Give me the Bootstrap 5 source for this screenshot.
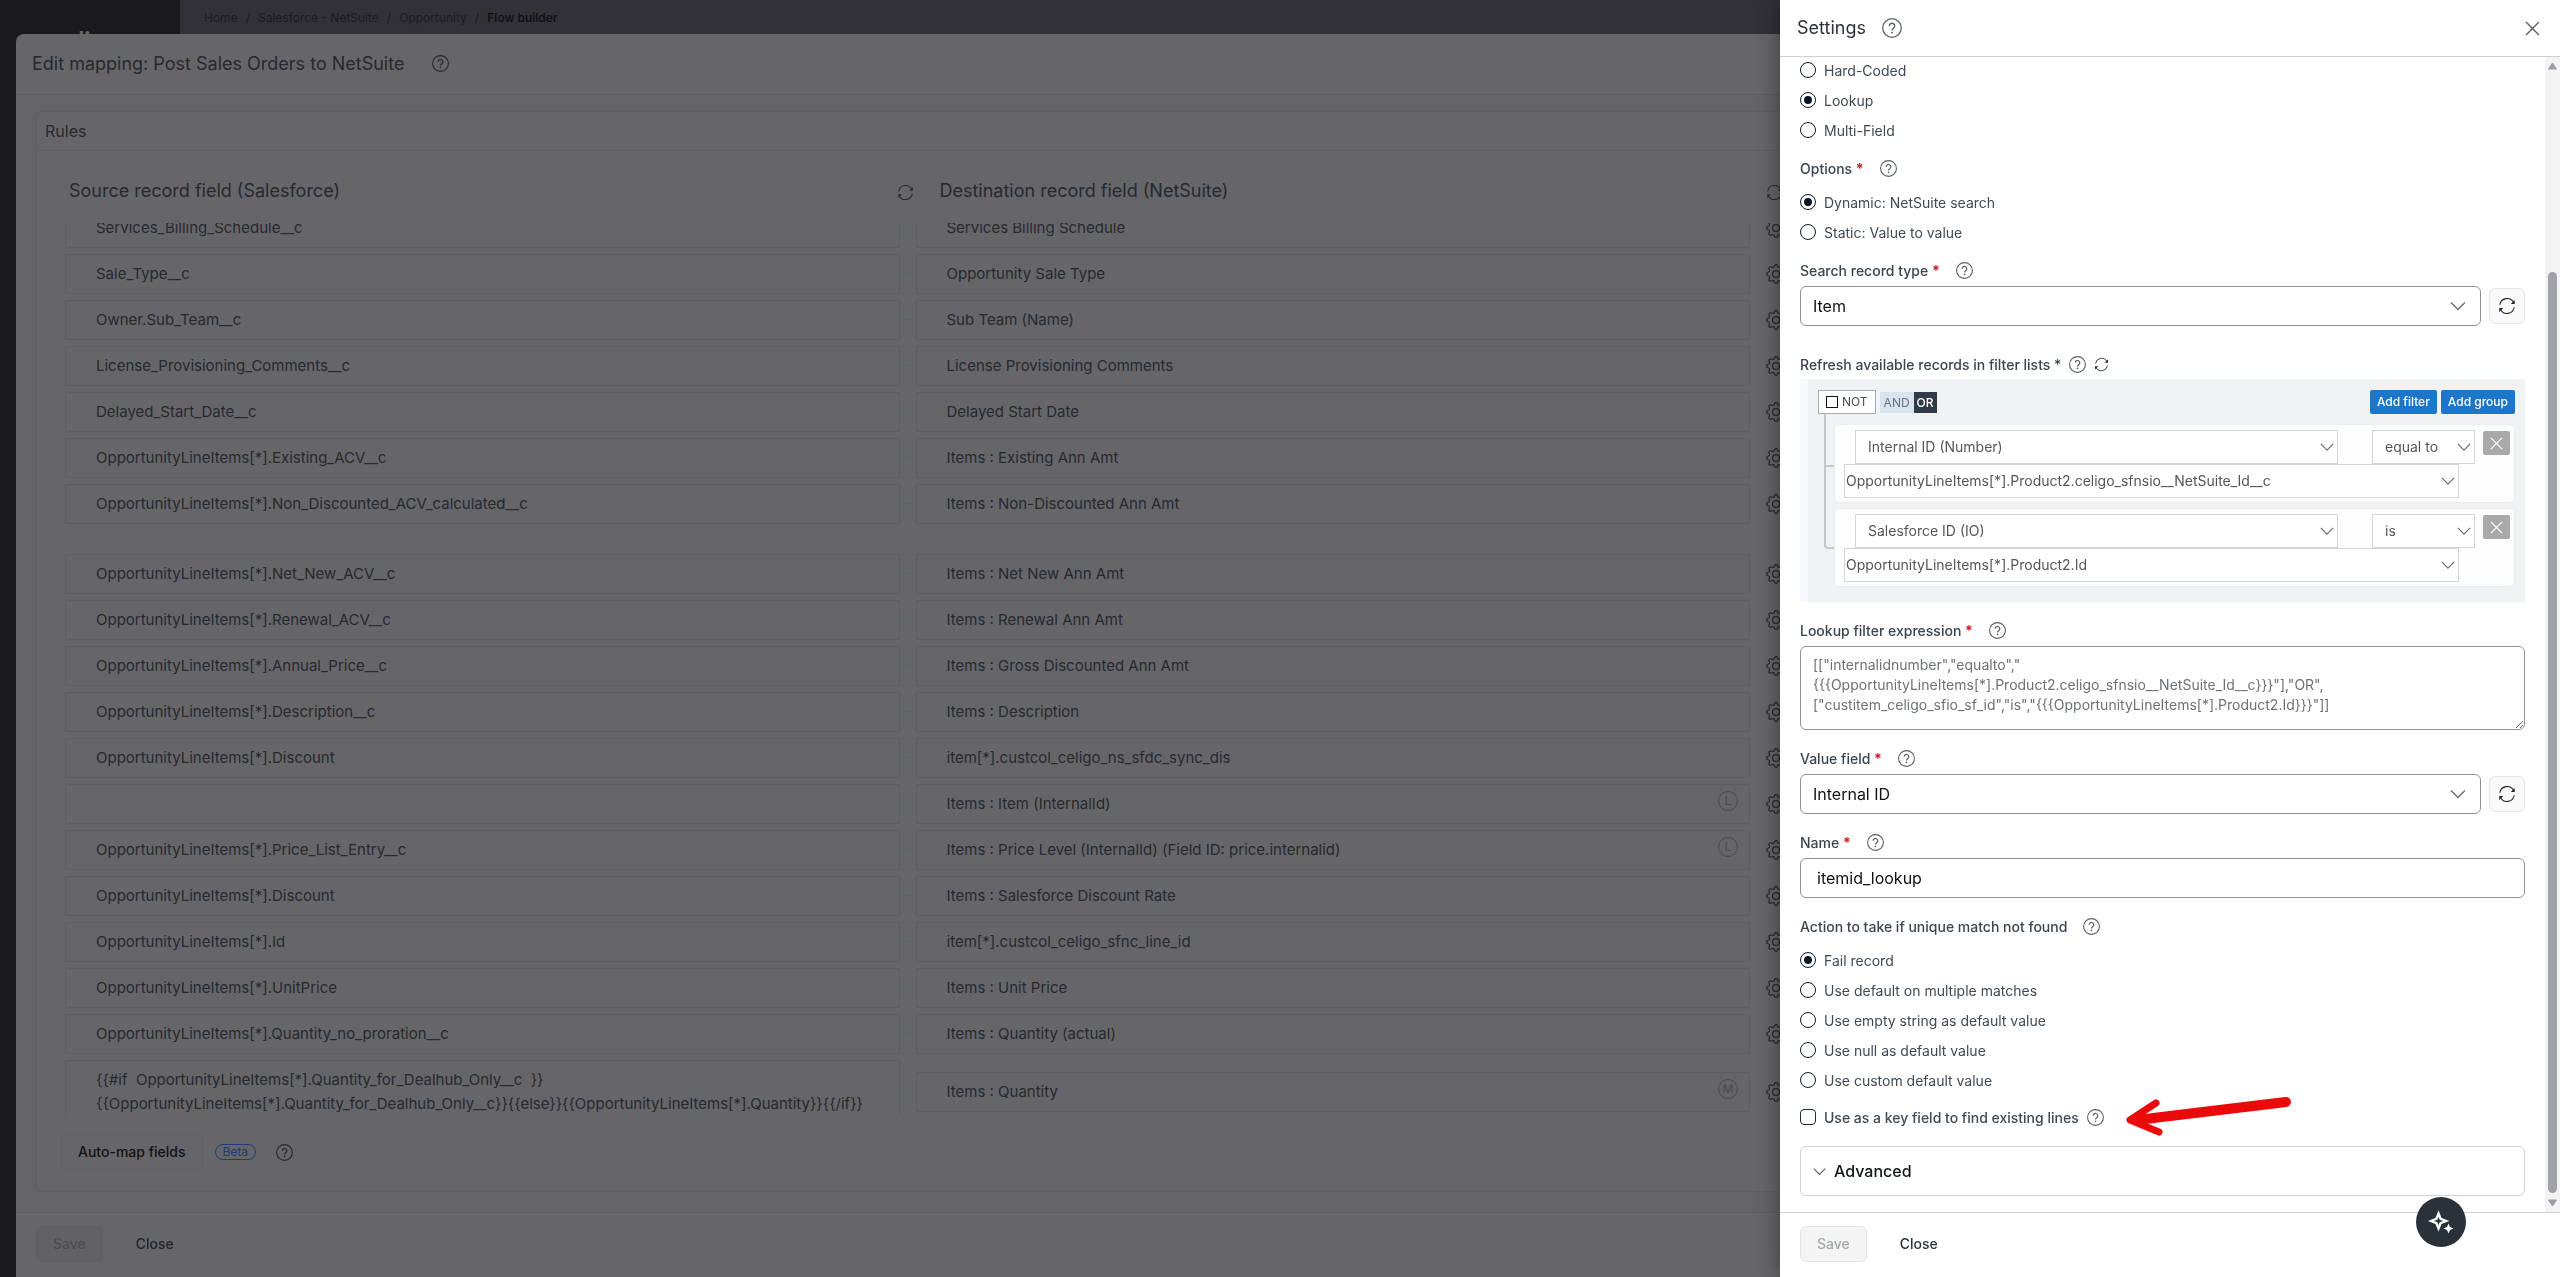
<!DOCTYPE html>
<html lang="en">
<head>
<meta charset="utf-8">
<meta name="viewport" content="width=device-width, initial-scale=1">
<title>Edit mapping settings</title>
<link href="https://cdn.jsdelivr.net/npm/bootstrap@5.3.0/dist/css/bootstrap.min.css" rel="stylesheet">
<style>
:root{--bs-body-font-family:Inter,"Liberation Sans",sans-serif;--bs-body-font-size:14px;--ink:#2a3139;--dim-ink:#27292f;--dim-line:#5a5f62}
html,body{height:100%}
body{overflow:hidden;background:#323136;color:#3f4a55}
svg{flex:none;display:block}
button{font-family:inherit}
/* page behind */
.side-nav{width:180px;background:#1a1a1c;color:#68686a;padding:27px 0 0 54px;font:700 24px/28px Lato,sans-serif}
.crumbs{--bs-breadcrumb-divider-color:#1b1b1f;--bs-breadcrumb-item-active-color:#0d0d10;--bs-breadcrumb-item-padding-x:8px;font-size:12px;line-height:16px;padding:10px 24px;margin:0}
.crumbs a{color:#1c1c20;text-decoration:none}
.crumbs .active{font-weight:500}
/* mapping dialog */
.map-dialog{top:34px;left:16px;right:0;bottom:0;background:#666668;border-top-left-radius:8px;color:var(--dim-ink)}
.map-head{height:61px;padding:0 16px;gap:28px;border-bottom:1px solid var(--dim-line);font-size:18px}
.map-head h1{font-size:18px;font-weight:400;margin:0}
.map-main{background:#646466;padding:16px 20px 20px;min-height:0}
.rules-panel{background:#666668;border:1px solid #5d5f62;border-radius:6px;min-height:0}
.rules-title{height:40px;padding-left:8px;font-size:16px;border-bottom:1px solid #5d5f62}
.map-area{padding:0 753px 0 28px;min-height:0}
.map-grid{display:grid;grid-template-columns:minmax(0,1fr) 16px minmax(0,1fr) 36px}
.col-heads{height:72px;padding-top:7px}
.col-heads h2{font-size:18px;font-weight:400;margin:0;padding-left:4px}
.col-heads .dest{padding-left:24px}
.col-heads .src-sync{margin-left:-3px}
.map-list{overflow:hidden;gap:6px}
.map-list>.map-grid{flex:none;align-items:center}
.map-list>.map-grid:first-child{margin-top:-15px}
.spaced{margin-bottom:24px}
.map-field{display:block;width:100%;height:40px;border:1px solid var(--dim-line);border-radius:2px;background:transparent;color:var(--dim-ink);font-size:15px;line-height:24px;padding:0 30px;resize:none;overflow:hidden}
.map-field.tall{height:64px;padding-top:7px}
.link-line{border-top:1px solid #56666a}
.kind{position:absolute;right:12px;top:7px;width:20px;height:20px;border:1px solid #434b56;border-radius:50%;color:#434b56;font-size:12px;line-height:18px;text-align:center}
.map-tools{padding:17px 24px 21px;gap:12px}
.btn{--bs-btn-font-size:14px;--bs-btn-font-weight:500;--bs-btn-line-height:20px;--bs-btn-border-radius:6px;--bs-btn-disabled-opacity:1}
.btn-automap{--bs-btn-color:#111214;--bs-btn-border-color:#5f6164;--bs-btn-padding-x:16px;--bs-btn-padding-y:7px}
.beta{border:1px solid #1c3a7c;color:#1c3a7c;border-radius:8px;font-size:12px;line-height:14px;padding:0 7px}
.dialog-foot{height:65px;gap:16px;border-top:1px solid var(--dim-line);padding:0 20px 3px}
.btn-save{--bs-btn-disabled-color:#4c4c4e;--bs-btn-disabled-bg:#626264;--bs-btn-disabled-border-color:#5d5f62;--bs-btn-padding-x:16px;--bs-btn-padding-y:7px}
.btn-close-text{--bs-btn-color:#22252c;--bs-btn-padding-x:16px;--bs-btn-padding-y:7px}
/* settings drawer */
.settings{--bs-offcanvas-width:780px;--bs-offcanvas-border-width:0;--bs-offcanvas-bg:#fff;box-shadow:0 0 20px rgba(0,0,0,.45);color:#3f4a55}
.settings-head{height:57px;padding:0 20px 0 17px;gap:16px;border-bottom:1px solid #cfd0d3;color:var(--ink)}
.settings-head h2{font-size:18px;font-weight:400;margin:0}
.settings-form{padding:2px 20px 0}
.plain{border:0;background:none;padding:0;color:#4e535b}
.opt-list{display:grid;gap:8px;margin:0;padding:0}
.opt{display:flex;align-items:center;height:22px;gap:8px;margin:0;padding:0;min-height:0}
.opt .form-check-input{float:none;margin:0;width:16px;height:16px;border:1px solid #0f1829;background-color:#fff;flex:none}
.opt .form-check-input:checked{background-color:#fff;background-image:url("data:image/svg+xml,%3csvg xmlns='http://www.w3.org/2000/svg' viewBox='0 0 16 16'%3e%3ccircle cx='8' cy='8' r='4.5' fill='%230a1526'/%3e%3c/svg%3e")}
.opt .form-check-input[type=checkbox]{border-radius:4px;border-color:#222b38}
.key-label{font-weight:500}
.key-row{margin-top:15px}
.field-head{display:flex;align-items:center;height:24px;gap:16px;margin:16px 0 4px;font-size:14px;font-weight:500;color:#3a4550}
.field-head label,.field-head .cap{display:inline-block;white-space:nowrap}
.field-head b{color:#cc1a22;font-weight:700}
.field-head svg,.settings-head svg,.opt svg{color:#5c6068}
.field-head .plain svg,.square svg{color:#1f252e}
.field-head.tight{margin:26px 0 3px;gap:8px}
.field-head.after-opts{margin-top:15px}
.opts-head{margin:15px 0 11px}
.form-select,.form-control{--chev:url("data:image/svg+xml,%3csvg xmlns='http://www.w3.org/2000/svg' viewBox='0 0 16 16'%3e%3cpath d='M1 4.500l7 7 7-7' fill='none' stroke='%236b6e76' stroke-width='1.400'/%3e%3c/svg%3e")}
.box{height:40px;border:1px solid #8f9299;border-radius:6px;background-color:#fff;color:#0e1116;font-size:16px;padding:0 12px;line-height:24px}
.form-select.box{background-image:var(--chev);background-position:right 14px center;background-size:16px}
.expr{height:84px;font-size:14px;line-height:20px;padding:8px 12px;color:#6e7178;resize:vertical;display:block}
.square{width:36px;height:36px;border:1px solid #e4e5e8;border-radius:6px;background:#f9f9fa;color:#1f252e;display:grid;place-items:center;padding:0}
.filter-box{border-left:8px solid #f8f9ff;background:#f1f2f4;padding:11px 10px 15px 10px}
.not-label{border:1px solid #a9abae;background:#fff;color:#4c4c4c;height:24px;padding:0 7px;gap:4px;font-size:12px}
.not-label input{appearance:none;width:12px;height:12px;border:1px solid #111;margin:0;background:#fff}
.cond{border:0;height:21px;padding:0 4px;font-size:12px;line-height:21px;background:#d5e4ee;color:#65747f}
.cond.on{background:#313b46;color:#fff;padding:0 3px;font-weight:500}
.btn-add{--bs-btn-color:#fff;--bs-btn-bg:#1e76c9;--bs-btn-padding-x:6px;--bs-btn-padding-y:1px;--bs-btn-font-size:12px;--bs-btn-border-radius:2px;--bs-btn-line-height:20px}
.rule-tree{margin:10px 0 0 16px;gap:5px}
.rule-item{background:#fdfdfd;border:1px solid #ededee;border-radius:5px;padding:5px 4px 4px 9px;height:79px}
.rule-item::before{content:"";position:absolute;left:-11px;width:10px;border-left:2px solid #c5c6c7;border-bottom:2px solid #c5c6c7;top:-11px;height:53px}
.rule-item:last-child::before{top:-43px;height:83px;border-bottom-left-radius:4px}
.rule-name{margin-left:11px;flex:1}
.rule-op{margin-left:34px;width:103px;flex:none}
.mini{height:34px;border:1px solid #d5d6d8;border-radius:0;background-color:#fff;color:#55565a;font-size:14px;line-height:20px;padding:0 24px 0 12px}
.form-select.mini{background-image:var(--chev);background-size:14px;background-position:right 3px center}
.mini.value{padding-left:1px;margin-right:51px;width:auto}
.del{width:27px;height:24px;border:0;border-radius:2px;background:#a9a9a9;color:#fff;display:grid;place-items:center;padding:0;margin:1px 0 0 8px;flex:none}
.advanced{height:50px;border:1px solid #d2d3d5;border-radius:6px;background:#fff;color:#111418;font-size:16px;font-weight:500;gap:8px;padding:0 12px;margin-top:18px;width:100%}
.arrow{margin:-9px 0 -9px 13px}
.scroll-rail{width:15px;background:#f3f3f4;color:#9c9ca5;padding:5px 0}
.scroll-thumb{width:9px;border-radius:5px;background:#a1a1aa;flex:1;margin:202px 0 6px}
.settings .dialog-foot{border-color:#cfd0d3}
.settings .btn-save{--bs-btn-disabled-color:#a3a6ad;--bs-btn-disabled-bg:#f4f4f5;--bs-btn-disabled-border-color:#e4e5e8}
.settings .btn-close-text{--bs-btn-color:#2c343d}
.assistant{right:94px;bottom:30px;width:50px;height:50px;border:0;border-radius:50%;background:#2a3138;color:#fff;display:grid;place-items:center;z-index:1060;padding:0}
</style>
<script src="https://cdn.jsdelivr.net/npm/bootstrap@5.3.0/dist/js/bootstrap.bundle.min.js"></script>
</head>
<body>
<svg width="0" height="0" class="position-absolute" aria-hidden="true">
<symbol id="help" viewBox="0 0 20 20"><circle cx="10" cy="10" r="9.300" fill="none" stroke="currentColor" stroke-width="1.300"/><path d="M7.300 8a2.700 2.700 0 1 1 4.300 2.100c-1 .75-1.600 1.100-1.600 2.300" fill="none" stroke="currentColor" stroke-width="1.400"/><circle cx="10" cy="14.600" r=".95" fill="currentColor"/></symbol>
<symbol id="sync" viewBox="0 0 20 20"><path d="M2 8.600A8.200 8.200 0 0 1 17.300 6M18 11.400A8.200 8.200 0 0 1 2.700 14" fill="none" stroke="currentColor" stroke-width="1.200"/><path d="M18.600 3.400v4.400h-4.400zM1.400 16.600v-4.400h4.400z" fill="currentColor"/></symbol>
<symbol id="cross" viewBox="0 0 14 14"><path d="M1 1l12 12M13 1L1 13" fill="none" stroke="currentColor" stroke-width="1.300"/></symbol>
<symbol id="gear" viewBox="0 0 16 16"><path fill="currentColor" d="M8 4.754a3.246 3.246 0 1 0 0 6.492 3.246 3.246 0 0 0 0-6.492zM5.754 8a2.246 2.246 0 1 1 4.492 0 2.246 2.246 0 0 1-4.492 0z"/><path fill="currentColor" d="M9.796 1.343c-.527-1.790-3.065-1.790-3.592 0l-.094.319a.873.873 0 0 1-1.255.52l-.292-.16c-1.640-.892-3.433.902-2.540 2.541l.159.292a.873.873 0 0 1-.52 1.255l-.319.094c-1.790.527-1.790 3.065 0 3.592l.319.094a.873.873 0 0 1 .52 1.255l-.16.292c-.892 1.640.901 3.434 2.541 2.540l.292-.159a.873.873 0 0 1 1.255.52l.094.319c.527 1.790 3.065 1.790 3.592 0l.094-.319a.873.873 0 0 1 1.255-.52l.292.16c1.640.893 3.434-.902 2.540-2.541l-.159-.292a.873.873 0 0 1 .52-1.255l.319-.094c1.790-.527 1.790-3.065 0-3.592l-.319-.094a.873.873 0 0 1-.52-1.255l.16-.292c.893-1.640-.902-3.433-2.541-2.540l-.292.159a.873.873 0 0 1-1.255-.52l-.094-.319zm-2.633.283c.246-.835 1.428-.835 1.674 0l.094.319a1.873 1.873 0 0 0 2.693 1.115l.291-.16c.764-.415 1.600.42 1.184 1.185l-.159.292a1.873 1.873 0 0 0 1.116 2.692l.318.094c.835.246.835 1.428 0 1.674l-.319.094a1.873 1.873 0 0 0-1.115 2.693l.16.291c.415.764-.42 1.600-1.185 1.184l-.291-.159a1.873 1.873 0 0 0-2.693 1.116l-.094.318c-.246.835-1.428.835-1.674 0l-.094-.319a1.873 1.873 0 0 0-2.692-1.115l-.292.16c-.764.415-1.600-.42-1.184-1.185l.159-.291A1.873 1.873 0 0 0 1.945 8.930l-.319-.094c-.835-.246-.835-1.428 0-1.674l.319-.094A1.873 1.873 0 0 0 3.060 4.377l-.16-.292c-.415-.764.42-1.600 1.185-1.184l.292.159a1.873 1.873 0 0 0 2.692-1.115l.094-.319z"/></symbol>
</svg>

<div class="d-flex h-100">
  <div class="side-nav">celigo</div>
  <nav aria-label="breadcrumb"><ol class="breadcrumb crumbs">
    <li class="breadcrumb-item"><a href="#">Home</a></li><li class="breadcrumb-item"><a href="#">Salesforce - NetSuite</a></li><li class="breadcrumb-item"><a href="#">Opportunity</a></li><li class="breadcrumb-item active" aria-current="page">Flow builder</li>
  </ol></nav>
</div>

<main class="map-dialog position-fixed d-flex flex-column">
  <header class="map-head d-flex align-items-center"><h1>Edit mapping: Post Sales Orders to NetSuite</h1><svg width="17" height="17"><use href="#help"/></svg></header>
  <div class="map-main flex-grow-1 d-flex flex-column">
    <section class="rules-panel flex-grow-1 d-flex flex-column">
      <div class="rules-title d-flex align-items-center">Rules</div>
      <div class="map-area flex-grow-1 d-flex flex-column">
        <div class="col-heads map-grid align-items-center">
          <h2>Source record field (Salesforce)</h2>
          <svg width="17" height="17" class="src-sync mt-1"><use href="#sync"/></svg>
          <h2 class="dest">Destination record field (NetSuite)</h2>
          <svg width="17" height="17" class="ms-3 mt-1"><use href="#sync"/></svg>
        </div>
        <div class="map-list flex-grow-1 d-flex flex-column" id="mapList"></div>
      </div>
      <div class="map-tools d-flex align-items-center">
        <button class="btn btn-automap" type="button">Auto-map fields</button><span class="beta">Beta</span><svg width="17" height="17" class="ms-2"><use href="#help"/></svg>
      </div>
    </section>
  </div>
  <footer class="dialog-foot d-flex align-items-center"><button class="btn btn-save" disabled>Save</button><button class="btn btn-close-text" type="button">Close</button></footer>
</main>

<aside class="settings offcanvas offcanvas-end show" data-bs-backdrop="false" data-bs-scroll="true" aria-label="Settings">
  <header class="settings-head d-flex align-items-center"><h2>Settings</h2><svg width="20" height="20"><use href="#help"/></svg><button class="plain ms-auto" aria-label="Close settings"><svg width="15" height="15"><use href="#cross"/></svg></button></header>
  <div class="d-flex flex-grow-1 overflow-hidden">
    <form class="settings-form flex-grow-1">
      <div class="opt-list">
        <label class="opt"><input class="form-check-input" type="radio" name="ftype">Hard-Coded</label>
        <label class="opt"><input class="form-check-input" type="radio" name="ftype" checked>Lookup</label>
        <label class="opt"><input class="form-check-input" type="radio" name="ftype">Multi-Field</label>
      </div>
      <div class="field-head opts-head"><span class="cap">Options <b>*</b></span><svg width="17" height="17"><use href="#help"/></svg></div>
      <div class="opt-list">
        <label class="opt"><input class="form-check-input" type="radio" name="mode" checked>Dynamic: NetSuite search</label>
        <label class="opt"><input class="form-check-input" type="radio" name="mode">Static: Value to value</label>
      </div>
      <div class="field-head after-opts"><label for="rec">Search record type <b>*</b></label><svg width="17" height="17"><use href="#help"/></svg></div>
      <div class="d-flex align-items-center gap-2"><select id="rec" class="form-select box"><option>Item</option></select><button type="button" class="square flex-shrink-0" aria-label="Refresh record types"><svg width="18" height="18"><use href="#sync"/></svg></button></div>

      <div class="field-head tight"><span class="cap">Refresh available records in filter lists *</span><svg width="17" height="17"><use href="#help"/></svg><button type="button" class="plain" aria-label="Refresh filters"><svg width="15" height="15"><use href="#sync"/></svg></button></div>
      <div class="filter-box">
        <div class="d-flex align-items-center">
          <label class="not-label d-flex align-items-center"><input type="checkbox">NOT</label>
          <button type="button" class="cond ms-1">AND</button><button type="button" class="cond on">OR</button>
          <button type="button" class="btn btn-add ms-auto">Add filter</button><button type="button" class="btn btn-add ms-1">Add group</button>
        </div>
        <div class="rule-tree d-flex flex-column">
          <div class="rule-item position-relative">
            <div class="d-flex align-items-start"><select class="form-select mini rule-name" aria-label="Field"><option>Internal ID (Number)</option></select><select class="form-select mini rule-op" aria-label="Operator"><option>equal to</option></select><button type="button" class="del" aria-label="Remove filter"><svg width="13" height="13"><use href="#cross"/></svg></button></div>
            <div class="d-flex"><select class="form-select mini value flex-grow-1" aria-label="Value"><option>OpportunityLineItems[*].Product2.celigo_sfnsio__NetSuite_Id__c</option></select></div>
          </div>
          <div class="rule-item position-relative">
            <div class="d-flex align-items-start"><select class="form-select mini rule-name" aria-label="Field"><option>Salesforce ID (IO)</option></select><select class="form-select mini rule-op" aria-label="Operator"><option>is</option></select><button type="button" class="del" aria-label="Remove filter"><svg width="13" height="13"><use href="#cross"/></svg></button></div>
            <div class="d-flex"><select class="form-select mini value flex-grow-1" aria-label="Value"><option>OpportunityLineItems[*].Product2.Id</option></select></div>
          </div>
        </div>
      </div>

      <div class="field-head"><label for="expr">Lookup filter expression <b>*</b></label><svg width="17" height="17"><use href="#help"/></svg></div>
      <textarea id="expr" class="form-control box expr" spellcheck="false">[["internalidnumber","equalto","
{{{OpportunityLineItems[*].Product2.celigo_sfnsio__NetSuite_Id__c}}}"],"OR",
["custitem_celigo_sfio_sf_id","is","{{{OpportunityLineItems[*].Product2.Id}}}"]]</textarea>
      <div class="field-head"><label for="val">Value field <b>*</b></label><svg width="17" height="17"><use href="#help"/></svg></div>
      <div class="d-flex align-items-center gap-2"><select id="val" class="form-select box"><option>Internal ID</option></select><button type="button" class="square flex-shrink-0" aria-label="Refresh value fields"><svg width="18" height="18"><use href="#sync"/></svg></button></div>
      <div class="field-head"><label for="nm">Name <b>*</b></label><svg width="17" height="17"><use href="#help"/></svg></div>
      <input id="nm" class="form-control box px-3" type="text" value="itemid_lookup" spellcheck="false">
      <div class="field-head opts-head mt-3"><span class="cap">Action to take if unique match not found</span><svg width="17" height="17"><use href="#help"/></svg></div>
      <div class="opt-list">
        <label class="opt"><input class="form-check-input" type="radio" name="act" checked>Fail record</label>
        <label class="opt"><input class="form-check-input" type="radio" name="act">Use default on multiple matches</label>
        <label class="opt"><input class="form-check-input" type="radio" name="act">Use empty string as default value</label>
        <label class="opt"><input class="form-check-input" type="radio" name="act">Use null as default value</label>
        <label class="opt"><input class="form-check-input" type="radio" name="act">Use custom default value</label>
      </div>
      <div class="opt key-row"><input id="key" class="form-check-input" type="checkbox"><label for="key" class="key-label">Use as a key field to find existing lines</label><svg width="17" height="17"><use href="#help"/></svg>
        <svg class="arrow" width="170" height="40" viewBox="0 0 170 40" aria-hidden="true"><path d="M161 5L12 23" stroke="#eb0a0a" stroke-width="10" stroke-linecap="round"/><path d="M31 6L5 23 34 35" fill="none" stroke="#eb0a0a" stroke-width="7" stroke-linecap="round" stroke-linejoin="round"/></svg>
      </div>
      <button type="button" class="advanced d-flex align-items-center"><svg width="13" height="13" viewBox="0 0 16 16"><path d="M1 4.500l7 7 7-7" fill="none" stroke="#5c6068" stroke-width="1.500"/></svg>Advanced</button>
    </form>
    <div class="scroll-rail d-flex flex-column align-items-center" aria-hidden="true"><svg width="9" height="8" viewBox="0 0 9 8"><path d="M4.500 1L8.500 7h-8z" fill="currentColor" stroke="currentColor"/></svg><div class="scroll-thumb"></div><svg width="9" height="8" viewBox="0 0 9 8"><path d="M4.500 7L8.500 1h-8z" fill="currentColor" stroke="currentColor"/></svg></div>
  </div>
  <footer class="dialog-foot d-flex align-items-center"><button class="btn btn-save" disabled>Save</button><button class="btn btn-close-text" type="button">Close</button></footer>
</aside>

<button class="assistant position-fixed" aria-label="Assistant"><svg width="26" height="26" viewBox="0 0 26 26"><path d="M10.500 4.500l2.100 5.400 5.400 2.100-5.400 2.100-2.100 5.400-2.100-5.400L3 12l5.400-2.100z" fill="none" stroke="#fff" stroke-width="2.400"/><path d="M20.500 14.500l1.500 3.500 3.500 1.500-3.500 1.500-1.500 3.500-1.500-3.500-3.500-1.500 3.500-1.500z" fill="#fff"/></svg></button>

<script>
const L = 'OpportunityLineItems[*].';
const rows = [
  ['Services_Billing_Schedule__c', 'Services Billing Schedule'],
  ['Sale_Type__c', 'Opportunity Sale Type'],
  ['Owner.Sub_Team__c', 'Sub Team (Name)'],
  ['License_Provisioning_Comments__c', 'License Provisioning Comments'],
  ['Delayed_Start_Date__c', 'Delayed Start Date'],
  [L + 'Existing_ACV__c', 'Items : Existing Ann Amt'],
  [L + 'Non_Discounted_ACV_calculated__c', 'Items : Non-Discounted Ann Amt', '', 'spaced'],
  [L + 'Net_New_ACV__c', 'Items : Net New Ann Amt'],
  [L + 'Renewal_ACV__c', 'Items : Renewal Ann Amt'],
  [L + 'Annual_Price__c', 'Items : Gross Discounted Ann Amt'],
  [L + 'Description__c', 'Items : Description'],
  [L + 'Discount', 'item[*].custcol_celigo_ns_sfdc_sync_dis'],
  ['', 'Items : Item (InternalId)', 'L'],
  [L + 'Price_List_Entry__c', 'Items : Price Level (InternalId) (Field ID: price.internalid)', 'L'],
  [L + 'Discount', 'Items : Salesforce Discount Rate'],
  [L + 'Id', 'item[*].custcol_celigo_sfnc_line_id'],
  [L + 'UnitPrice', 'Items : Unit Price'],
  [L + 'Quantity_no_proration__c', 'Items : Quantity (actual)'],
  ['{{#if  ' + L + 'Quantity_for_Dealhub_Only__c  }}\n{{' + L + 'Quantity_for_Dealhub_Only__c}}{{else}}{{' + L + 'Quantity}}{{/if}}', 'Items : Quantity', 'M']
];
document.getElementById('mapList').innerHTML = rows.map(([src, dst, kind, cls]) => `
  <div class="map-grid ${cls || ''}">
    ${src.includes('\n') ? `<textarea class="map-field tall" aria-label="Source field" spellcheck="false">${src}</textarea>` : `<input class="map-field" aria-label="Source field" value="${src}">`}
    <div class="link-line"></div>
    <div class="position-relative"><input class="map-field" aria-label="Destination field" value="${dst}">${kind ? `<span class="kind">${kind}</span>` : ''}</div>
    <svg width="20" height="20" class="ms-3"><use href="#gear"/></svg>
  </div>`).join('');
</script>
</body>
</html>
